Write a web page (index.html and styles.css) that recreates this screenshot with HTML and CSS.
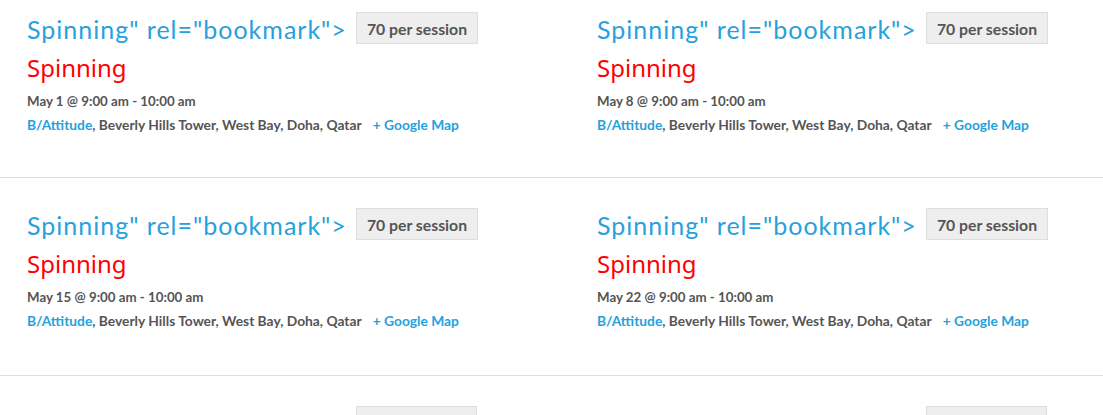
FILE: index.html
```html
<!DOCTYPE html>
<html>
<head>
<meta charset="utf-8">
<link rel="stylesheet" href="styles.css">
</head>
<body>
<div class="events">
  <div class="row">
    <div class="event">
      <div class="head"><a class="title">Spinning" rel="bookmark"&gt;</a><span class="cost">70 per session</span></div>
      <div class="name">Spinning</div>
      <div class="date">May 1 @ 9:00 am - 10:00 am</div>
      <div class="venue"><a class="link">B/Attitude</a>, Beverly Hills Tower, West Bay, Doha, Qatar <a class="link map">+ Google Map</a></div>
    </div>
    <div class="event">
      <div class="head"><a class="title">Spinning" rel="bookmark"&gt;</a><span class="cost">70 per session</span></div>
      <div class="name">Spinning</div>
      <div class="date">May 8 @ 9:00 am - 10:00 am</div>
      <div class="venue"><a class="link">B/Attitude</a>, Beverly Hills Tower, West Bay, Doha, Qatar <a class="link map">+ Google Map</a></div>
    </div>
  </div>
  <div class="row">
    <div class="event">
      <div class="head"><a class="title">Spinning" rel="bookmark"&gt;</a><span class="cost">70 per session</span></div>
      <div class="name">Spinning</div>
      <div class="date">May 15 @ 9:00 am - 10:00 am</div>
      <div class="venue"><a class="link">B/Attitude</a>, Beverly Hills Tower, West Bay, Doha, Qatar <a class="link map">+ Google Map</a></div>
    </div>
    <div class="event">
      <div class="head"><a class="title">Spinning" rel="bookmark"&gt;</a><span class="cost">70 per session</span></div>
      <div class="name">Spinning</div>
      <div class="date">May 22 @ 9:00 am - 10:00 am</div>
      <div class="venue"><a class="link">B/Attitude</a>, Beverly Hills Tower, West Bay, Doha, Qatar <a class="link map">+ Google Map</a></div>
    </div>
  </div>
  <div class="row">
    <div class="event">
      <div class="head"><span class="cost cost-only"></span></div>
    </div>
    <div class="event">
      <div class="head"><span class="cost cost-only"></span></div>
    </div>
  </div>
</div>
</body>
</html>
```
FILE: styles.css
```css
html, body {
  margin: 0;
  padding: 0;
  background: #fff;
  overflow: hidden;
}
body {
  font-family: Lato, "Liberation Sans", sans-serif;
  color: #555;
}
.events {
  display: flex;
  flex-direction: column;
}
.row {
  display: flex;
  padding: 30px 0 0 0;
  height: 167px;
  border-bottom: 1px solid #ddd;
}
.row:first-child {
  padding-top: 12px;
  height: 165px;
}
.event {
  flex: 0 0 570px;
  padding-left: 27px;
  box-sizing: border-box;
}
.head {
  display: flex;
  align-items: center;
  gap: 9px;
  height: 32px;
}
.title {
  font-family: Lato, sans-serif;
  font-size: 25px;
  letter-spacing: 1px;
  color: #27a1dc;
  white-space: nowrap;
  margin-top: 2px;
}
.cost {
  display: inline-flex;
  align-items: center;
  height: 32px;
  box-sizing: border-box;
  padding: 0 10px;
  background: #eee;
  border: 1px solid #ddd;
  font-size: 15.8px;
  font-weight: bold;
  color: #555;
  white-space: nowrap;
}
.cost-only {
  width: 121px;
  margin-left: 329px;
}
.name {
  font-family: "Noto Sans", sans-serif;
  font-size: 24px;
  color: #f00;
  line-height: 32px;
  margin-top: 8px;
}
.date {
  font-size: 13.3px;
  font-weight: bold;
  line-height: 24px;
  margin-top: 5px;
}
.venue {
  font-size: 13.8px;
  font-weight: bold;
  line-height: 24px;
  white-space: nowrap;
}
.link {
  color: #27a1dc;
}
.map {
  margin-left: 8px;
}
```
